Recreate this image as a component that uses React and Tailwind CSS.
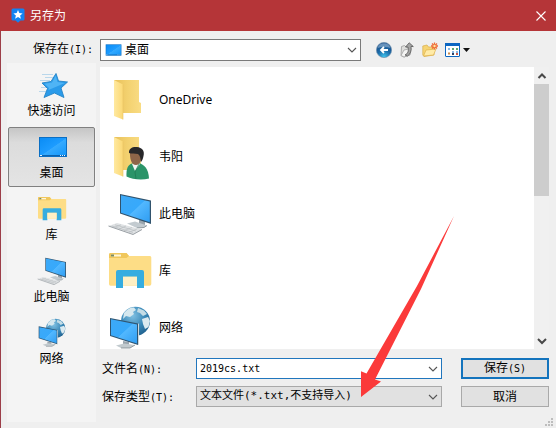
import { useState } from "react";

const ui = "font-['Noto_Sans','Noto_Sans_CJK_SC',sans-serif]";

function Defs() {
  return (
    <svg className="absolute h-0 w-0" aria-hidden="true">
      <defs>
        <linearGradient id="screen" x1="0" y1="0" x2="1" y2="1">
          <stop offset="0" stopColor="#3da9f7" />
          <stop offset="0.5" stopColor="#37a9fb" />
          <stop offset="0.52" stopColor="#52b8ff" />
          <stop offset="1" stopColor="#2f9df2" />
        </linearGradient>
        <linearGradient id="desk" x1="0" y1="0" x2="1" y2="1">
          <stop offset="0" stopColor="#0a8cf5" />
          <stop offset="0.5" stopColor="#1d9cff" />
          <stop offset="0.52" stopColor="#35aaff" />
          <stop offset="1" stopColor="#1296fa" />
        </linearGradient>
        <linearGradient id="flap" x1="0" y1="0" x2="1" y2="0">
          <stop offset="0" stopColor="#ffe9a0" />
          <stop offset="1" stopColor="#fbd874" />
        </linearGradient>
        <linearGradient id="folder" x1="0" y1="0" x2="1" y2="0">
          <stop offset="0" stopColor="#e8c05a" />
          <stop offset="0.5" stopColor="#f3d16f" />
          <stop offset="1" stopColor="#f9dc84" />
        </linearGradient>
        <radialGradient id="globe" cx="0.4" cy="0.3" r="0.75">
          <stop offset="0" stopColor="#7fc0e2" />
          <stop offset="0.6" stopColor="#3685b5" />
          <stop offset="1" stopColor="#1f5f8c" />
        </radialGradient>
        <radialGradient id="back" cx="0.5" cy="0.95" r="0.9">
          <stop offset="0" stopColor="#3fc5ee" />
          <stop offset="0.5" stopColor="#1a6aa8" />
          <stop offset="1" stopColor="#1c4a84" />
        </radialGradient>
      </defs>
    </svg>
  );
}

function FolderShape() {
  return (
    <>
      <path d="M8 4H33V26L35 27V37H17Z" fill="url(#folder)" />
      <path d="M8 4L17 8.5V43.5L8 40Z" fill="url(#flap)" />
      <path d="M17 8.5V43.5" stroke="#e9c465" strokeWidth="0.6" />
    </>
  );
}

function FolderIcon({ className }) {
  return (
    <svg viewBox="0 0 48 48" className={className} aria-hidden="true">
      <FolderShape />
    </svg>
  );
}

function UserIcon({ className }) {
  return (
    <svg viewBox="0 0 48 48" className={className} aria-hidden="true">
      <FolderShape />
      <path d="M20.500 43.500C20 36 22 31.500 26 30.500L33 30C38 32 42.500 35 43 45.500C36 47.500 26 46.500 20.500 43.500Z" fill="#2b9468" />
      <path d="M26 31L29 38L34 31L31 29Z" fill="#f1f5f3" />
      <path d="M33 31L29 39L30 46" stroke="#1f7a54" strokeWidth="0.8" fill="none" />
      <path d="M24 18C24 14.500 36 15 36 20C36 27 34 32 30 32C25.500 32 23.500 26 24 18Z" fill="#8d6549" />
      <path d="M23 20C22.500 15 27 13.500 31 14C36 14.500 39 18 37.500 23C37 26 36 28 35 29C34.500 25 34 22.500 32 21C29 20.500 25 21 23 20Z" fill="#28282a" />
    </svg>
  );
}

function ComputerIcon({ className }) {
  return (
    <svg viewBox="0 0 48 48" className={className} aria-hidden="true">
      <path d="M33 29L39 31V36L33 34Z" fill="#9aa5ad" />
      <path d="M21 33.500L29 31.500L41 35.500L38 37.500L31 38Z" fill="#c3cbd0" />
      <path d="M31 38L38 37.500L41 35.500" stroke="#7c868d" strokeWidth="0.8" fill="none" />
      <path d="M14 4L45 10.500V34L14 23.500Z" fill="#31536d" />
      <path d="M15 5.300L43.800 11.400V32.200L15 22.700Z" fill="url(#screen)" />
      <path d="M2.500 36L11 33L36 39.500L27 44.500Z" fill="#dfe2e4" />
      <path d="M2.500 36L27 44.500L36 39.500" stroke="#9ba1a6" strokeWidth="1" fill="none" />
      <path d="M6 36L27 42.500M9 34.800L30 41M8 37.500L15 34.800M13 39L20 36M18 40.700L26 37.500M23 42.300L31 39" stroke="#b3b8bc" strokeWidth="0.6" />
    </svg>
  );
}

function LibraryIcon({ className }) {
  return (
    <svg viewBox="0 0 48 48" className={className} aria-hidden="true">
      <path d="M3 7.500Q3 6 4.500 6H20.500L23 9H44Q45.300 9 45.300 10.500V37Q45.300 38.700 43.500 38.700H4.500Q3 38.700 3 37Z" fill="#fddd86" />
      <path d="M3 7.500Q3 6 4.500 6H20.500L23 9L20.500 11H3Z" fill="#f0c75c" />
      <path d="M5 7.500H15V9.500H5Z" fill="#fff6d8" />
      <path d="M5 7.500H8V9.500H5Z" fill="#7b8b62" />
      <path d="M10 25Q10 23 12 23H36Q38 23 38 25V41H31V29.700H17V41H10Z" fill="#36ade0" />
      <path d="M17 29.700H31V38.700H17Z" fill="#fff0c4" />
    </svg>
  );
}

function NetworkIcon({ className }) {
  return (
    <svg viewBox="0 0 48 48" className={className} aria-hidden="true">
      <circle cx="29.500" cy="17.300" r="14.500" fill="url(#globe)" />
      <path d="M18 9C21 5 25 3 28 3.500L30 6L27 8L28 10L24 13L20 12L17 15Z" fill="#d5e8ef" />
      <path d="M32 4L38 6.500L41 10L37 12L34 9L31 8Z" fill="#c3dce6" />
      <path d="M36 15L42 13L44 17L42.500 23L39 25L37 20Z" fill="#dbeaf0" />
      <path d="M17 37L23 38V42L17 40Z" fill="#9aa5ad" />
      <path d="M10 41.500L18 39.500L29 41L24 44L15 44Z" fill="#c2cace" />
      <path d="M15 44H24L29 41" stroke="#7f888e" strokeWidth="0.8" fill="none" />
      <path d="M4 14L32 19.500V41L4 32Z" fill="#2f5571" />
      <path d="M32 19.500L33 19.800V40.500L32 41Z" fill="#c9d6dd" />
      <path d="M5 15.200L31 20.400V39.400L5 31.200Z" fill="url(#screen)" />
    </svg>
  );
}

function QuickIcon({ className }) {
  return (
    <svg viewBox="0 0 32 32" className={className} aria-hidden="true">
      <path d="M6 5.500H17M9 8.500H17M4 11.500H14M5 18.500H10M3 22.500H10" stroke="#a9cfe8" strokeWidth="0.8" />
      <path d="M20 4.500L22.500 12L31.500 13L25 19L28 28.500L18.500 24L8 28.500L11.500 19.500L6 14L15 12.500Z" fill="#2a9bea" stroke="#2483c6" strokeWidth="0.9" />
      <path d="M19.700 6.500L21.500 13L29 14L12.500 21L13 19L8.500 14.800L16 13.500Z" fill="#4fb4f5" />
    </svg>
  );
}

function DesktopIcon({ className }) {
  return (
    <svg viewBox="0 0 32 32" className={className} aria-hidden="true">
      <rect x="3" y="6" width="28" height="20" fill="#0b6fc4" />
      <rect x="4" y="7" width="26" height="18" fill="url(#desk)" />
      <path d="M4 24.500H30" stroke="#0d62ad" />
      <path d="M4 24.500H6M24 24.500H25M26 24.500H27M28 24.500H29" stroke="#e8f5ff" />
    </svg>
  );
}

function Chevron({ className, up = false, bold = false }) {
  return (
    <svg viewBox="0 0 10 10" className={className} fill="none" stroke={bold ? "#484848" : "#555"} strokeWidth={bold ? 2 : 1.1} aria-hidden="true">
      <path d={up ? "M1.500 7L5 3.500L8.500 7" : "M1 3L5 7L9 3"} />
    </svg>
  );
}

function Mono({ children }) {
  return <span className="font-['DejaVu_Sans_Mono',monospace] text-[10px]">{children}</span>;
}

const places = [
  { name: "快速访问", Icon: QuickIcon },
  { name: "桌面", Icon: DesktopIcon },
  { name: "库", Icon: LibraryIcon },
  { name: "此电脑", Icon: ComputerIcon },
  { name: "网络", Icon: NetworkIcon },
];

const files = [
  { name: "OneDrive", Icon: FolderIcon },
  { name: "韦阳", Icon: UserIcon },
  { name: "此电脑", Icon: ComputerIcon },
  { name: "库", Icon: LibraryIcon },
  { name: "网络", Icon: NetworkIcon },
];

function TitleBar() {
  return (
    <header className="flex h-[31px] shrink-0 items-center bg-[#b53538] pr-[9px] pl-[11px] text-white">
      <svg viewBox="0 0 14 15" className="h-[15px] w-[14px]" aria-hidden="true">
        <path d="M2 0.500H12Q13.500 0.500 13.500 2V11Q13.500 12.500 12 12.500H9.500L7 14.800L4.500 12.500H2Q0.500 12.500 0.500 11V2Q0.500 0.500 2 0.500Z" fill="#1283f2" />
        <path d="M7 2L8.300 5.100L11.600 5.400L9.100 7.600L9.900 10.800L7 9.100L4.100 10.800L4.900 7.600L2.400 5.400L5.700 5.100Z" fill="#fff" />
      </svg>
      <h1 className="ml-[5px] flex-1 text-xs">另存为</h1>
      <button type="button" aria-label="关闭">
        <svg viewBox="0 0 12 12" className="h-3 w-3" fill="none" stroke="#fff" strokeWidth="1.1" aria-hidden="true">
          <path d="M1.500 1.500L10.500 10.500M10.500 1.500L1.500 10.500" />
        </svg>
      </button>
    </header>
  );
}

function Toolbar() {
  return (
    <div className="flex h-8 shrink-0 items-start pt-2">
      <label htmlFor="location" className="w-[99px] pl-8 text-xs leading-5">
        保存在<Mono>(I):</Mono>
      </label>
      <div className="relative w-[261px]">
        <select id="location" className="block h-[22px] w-full appearance-none border border-[#7a7a7a] bg-white pl-6 text-xs text-black outline-none">
          <option>桌面</option>
        </select>
        <DesktopIcon className="pointer-events-none absolute top-0.5 left-1 h-[18px] w-[18px]" />
        <Chevron className="pointer-events-none absolute top-1.5 right-1 h-2.5 w-2.5" />
      </div>
      <div className="ml-[15px] flex h-[22px] items-center gap-[7px]">
        <button type="button" aria-label="后退">
          <svg viewBox="0 0 16 16" className="h-4 w-4" aria-hidden="true">
            <circle cx="8" cy="8" r="7.600" fill="url(#back)" stroke="#6b8fae" strokeWidth="0.7" />
            <path d="M1.500 6Q3 1.500 8 1.300Q13 1.500 14.500 6Q8 4 1.500 6Z" fill="#87aed0" opacity="0.7" />
            <path d="M12 8H5.500M8 5L5 8L8 11" fill="none" stroke="#fff" strokeWidth="1.800" />
          </svg>
        </button>
        <button type="button" aria-label="向上一级">
          <svg viewBox="0 0 16 16" className="h-4 w-4" aria-hidden="true">
            <path d="M2.500 4.500L5.500 3.500L7 5H11V13L5 15L2 13.500Z" fill="#dededc" stroke="#999" strokeWidth="0.8" />
            <path d="M2 13.500L5 8L12 6.500L10.500 13L5 15Z" fill="#f4f4f3" stroke="#a2a2a2" strokeWidth="0.8" />
            <path d="M6 13Q10.500 11 9 5H6.500L10.200 0.800L14.300 4.500H12Q13 11 8.500 14Z" fill="#a4a4a4" stroke="#585858" strokeWidth="0.8" />
          </svg>
        </button>
        <button type="button" aria-label="新建文件夹">
          <svg viewBox="0 0 16 16" className="h-4 w-4" aria-hidden="true">
            <path d="M0.800 4L5 3L6.500 5H12V13L2 14.500L0.800 13Z" fill="#f6d473" stroke="#d9ae4a" strokeWidth="0.7" />
            <path d="M1.500 14L4 8L14 7L11.500 13Z" fill="#ffeba8" stroke="#e0b24a" strokeWidth="0.7" />
            <path d="M12.500 0.500V7.500M9 4H16M10 1.500L15 6.500M15 1.500L10 6.500" stroke="#ef6a35" strokeWidth="1.300" />
            <circle cx="12.500" cy="4" r="1.200" fill="#ffe6a0" />
          </svg>
        </button>
        <button type="button" aria-label="视图" className="flex items-center gap-[3px]">
          <svg viewBox="0 0 15 14" className="h-[14px] w-[15px]" aria-hidden="true">
            <rect x="0.500" y="0.500" width="14" height="13" rx="0.500" fill="#fff" stroke="#0c66c2" />
            <path d="M0 1.500H15" stroke="#0c66c2" strokeWidth="3" />
            <path d="M3 6H5M7 9H9M11 9H13" stroke="#8ab8e4" strokeWidth="2" />
            <path d="M7 6H9M11 6H13" stroke="#5fa574" strokeWidth="2" />
            <path d="M3 10.500H5" stroke="#c98a4b" strokeWidth="2" />
            <path d="M7 11H9" stroke="#2b3e63" strokeWidth="2" />
            <path d="M11 11H13" stroke="#c7584b" strokeWidth="2" />
          </svg>
          <svg viewBox="0 0 7 4" className="h-1 w-[7px]" aria-hidden="true">
            <path d="M0 0H7L3.500 4Z" fill="#111" />
          </svg>
        </button>
      </div>
    </div>
  );
}

function Sidebar({ current, onSelect }) {
  return (
    <nav className="mb-1.5 ml-1.5 flex w-[89px] shrink-0 flex-col gap-0.5 bg-[#f4f4f4] px-px pt-0.5">
      {places.map(({ name, Icon }, i) => (
        <button
          key={name}
          type="button"
          onClick={() => onSelect(i)}
          className={
            i === current
              ? "flex h-[60px] flex-col items-center gap-0.5 rounded-xs border border-[#808080] bg-linear-to-b from-[#c6c6c6] via-[#dcdcdc] via-25% to-[#e4e4e4] pt-[3px] text-xs"
              : "flex h-[60px] flex-col items-center gap-0.5 border border-transparent pt-[3px] text-xs"
          }
        >
          <Icon className="h-8 w-8" />
          {name}
        </button>
      ))}
    </nav>
  );
}

function FileList() {
  return (
    <div className="flex min-h-0 flex-1">
      <ul className="min-w-0 flex-1 overflow-hidden bg-white pt-1 pl-1.5">
        {files.map(({ name, Icon }) => (
          <li key={name} className="flex h-[57px] items-center gap-[5px] text-xs">
            <Icon className="h-12 w-12" />
            {name}
          </li>
        ))}
      </ul>
      <div className="flex w-[15px] flex-col items-center bg-[#f0f0f0]">
        <button type="button" aria-label="向上滚动" className="flex h-[17px] items-center">
          <Chevron up bold className="h-2.5 w-2.5" />
        </button>
        <div className="w-full flex-1">
          <div className="h-[45%] bg-[#cdcdcd]" />
        </div>
        <button type="button" aria-label="向下滚动" className="flex h-[17px] items-center">
          <Chevron bold className="h-2.5 w-2.5" />
        </button>
      </div>
    </div>
  );
}

function SaveForm() {
  return (
    <form className="grid shrink-0 grid-cols-[94px_1fr_88px] gap-y-[7px] pt-[9px] pb-[21px] text-xs" onSubmit={(e) => e.preventDefault()}>
      <label htmlFor="filename" className="h-[21px] pl-0.5 leading-[21px]">
        文件名<Mono>(N):</Mono>
      </label>
      <div className="relative mr-[19px] ml-0.5">
        <input
          id="filename"
          defaultValue="2019cs.txt"
          className="block h-[21px] w-full border border-[#2176bd] bg-white pl-[3px] font-['DejaVu_Sans_Mono',monospace] text-[10px] text-black outline-none"
        />
        <Chevron className="pointer-events-none absolute top-1.5 right-1 h-2.5 w-2.5" />
      </div>
      <button type="submit" className="h-[21px] border-2 border-[#1474bd] bg-[#e1e1e1] leading-4">
        保存<Mono>(S)</Mono>
      </button>
      <label htmlFor="filetype" className="h-[21px] pl-0.5 leading-[21px]">
        保存类型<Mono>(T):</Mono>
      </label>
      <div className="relative mr-[19px] ml-0.5">
        <select
          id="filetype"
          className="block h-[21px] w-full appearance-none border border-[#a9a9a9] bg-[#e1e1e1] pl-[3px] font-['DejaVu_Sans_Mono','Noto_Sans_CJK_SC',monospace] text-[11px] text-black outline-none"
        >
          <option>文本文件(*.txt,不支持导入)</option>
        </select>
        <Chevron className="pointer-events-none absolute top-1.5 right-1 h-2.5 w-2.5" />
      </div>
      <button type="button" className="h-[21px] border border-[#a9a9a9] bg-[#e1e1e1] leading-4">
        取消
      </button>
    </form>
  );
}

export default function App() {
  const [current, setCurrent] = useState(1);
  return (
    <div className={`relative flex h-screen flex-col overflow-hidden bg-[#efefef] text-black ${ui}`}>
      <Defs />
      <TitleBar />
      <main className="flex min-h-0 flex-1 flex-col border-l border-[#9c3e48]">
        <Toolbar />
        <div className="flex min-h-0 flex-1">
          <Sidebar current={current} onSelect={setCurrent} />
          <div className="flex min-w-0 flex-1 flex-col pt-1 pr-[7px] pl-1">
            <FileList />
            <SaveForm />
          </div>
        </div>
      </main>
      <svg viewBox="0 0 9 9" className="absolute right-0.5 bottom-px h-[9px] w-[9px]" fill="#bdbdbd" aria-hidden="true">
        <path d="M6 0H8V2H6ZM3 3H5V5H3ZM6 3H8V5H6ZM0 6H2V8H0ZM3 6H5V8H3ZM6 6H8V8H6Z" />
      </svg>
      <svg viewBox="0 0 94 182" className="pointer-events-none absolute top-[216px] left-[361px] h-[182px] w-[94px]" aria-hidden="true">
        <path d="M93 0L56 70L5.500 157.500L0 155.300V181L20 165.500L14 163.500L60 73Z" fill="#fb3a3a" />
      </svg>
    </div>
  );
}
